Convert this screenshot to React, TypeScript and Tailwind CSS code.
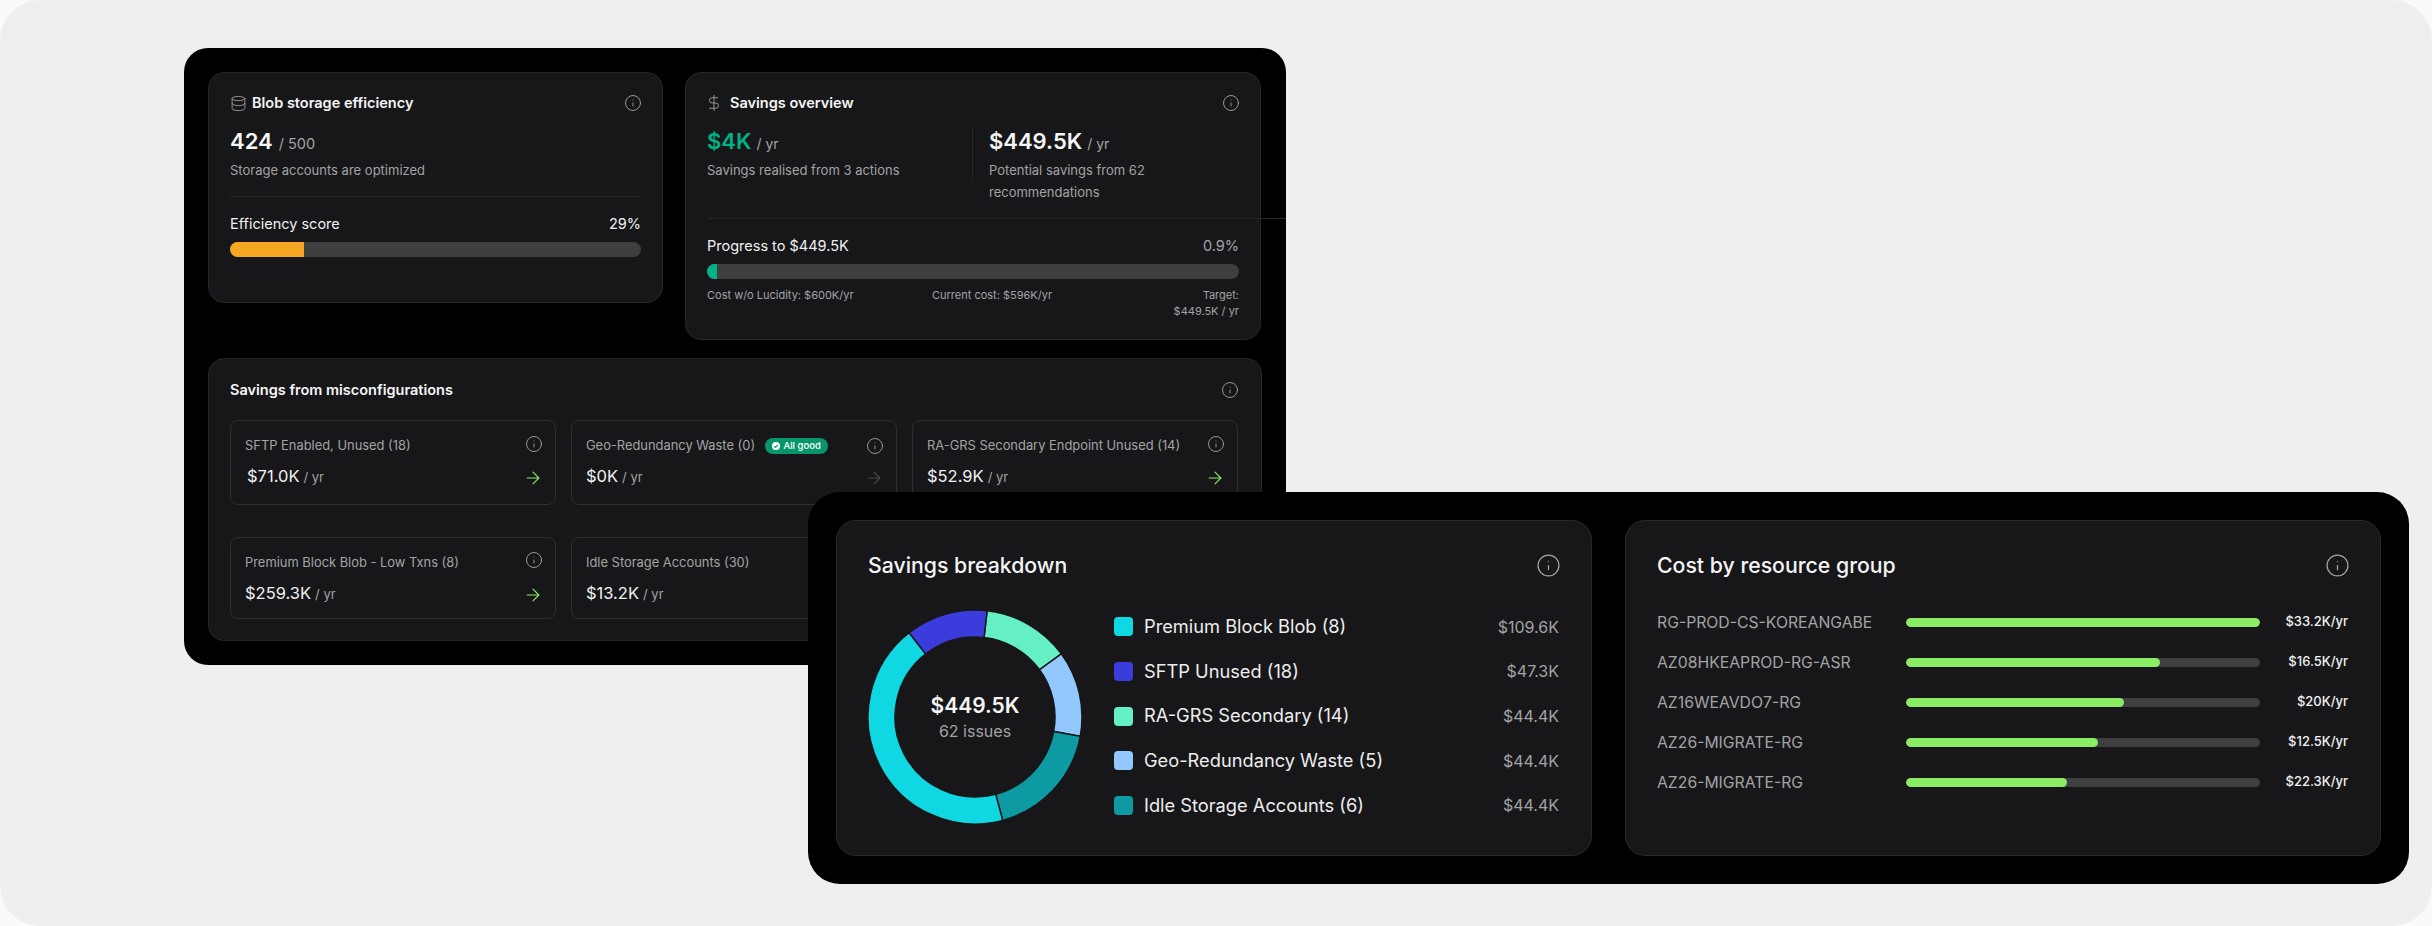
import { ArrowRight, Database, DollarSign, Info } from 'lucide-react';

const misconfigurations = [
  { label: 'SFTP Enabled, Unused (18)', value: '$71.0K', top: true, nudge: true },
  { label: 'Geo-Redundancy Waste (0)', value: '$0K', top: true, good: true },
  { label: 'RA-GRS Secondary Endpoint Unused (14)', value: '$52.9K', top: true },
  { label: 'Premium Block Blob - Low Txns (8)', value: '$259.3K', top: false },
  { label: 'Idle Storage Accounts (30)', value: '$13.2K', top: false },
];

const legend = [
  { label: 'Premium Block Blob (8)', value: '$109.6K', swatch: 'bg-[#10d8e2]' },
  { label: 'SFTP Unused (18)', value: '$47.3K', swatch: 'bg-[#3a3ddb]' },
  { label: 'RA-GRS Secondary (14)', value: '$44.4K', swatch: 'bg-[#64efc5]' },
  { label: 'Geo-Redundancy Waste (5)', value: '$44.4K', swatch: 'bg-[#93c8ff]' },
  { label: 'Idle Storage Accounts (6)', value: '$44.4K', swatch: 'bg-[#0d9aa3]' },
];

// angles are degrees clockwise from 12 o'clock
const donutSegments = [
  { from: 6.5, to: 53.8, color: '#64efc5' },
  { from: 53.8, to: 100.4, color: '#93c8ff' },
  { from: 100.4, to: 165, color: '#0d9aa3' },
  { from: 165, to: 322, color: '#10d8e2' },
  { from: 322, to: 366.5, color: '#3a3ddb' },
];

const resourceGroups = [
  { name: 'RG-PROD-CS-KOREANGABE', value: '$33.2K/yr', pct: 100 },
  { name: 'AZ08HKEAPROD-RG-ASR', value: '$16.5K/yr', pct: 71.7 },
  { name: 'AZ16WEAVDO7-RG', value: '$20K/yr', pct: 61.5 },
  { name: 'AZ26-MIGRATE-RG', value: '$12.5K/yr', pct: 54.3 },
  { name: 'AZ26-MIGRATE-RG', value: '$22.3K/yr', pct: 45.4 },
];

function polar(r: number, deg: number) {
  const a = (deg * Math.PI) / 180;
  return `${(107 + r * Math.sin(a)).toFixed(2)} ${(107 - r * Math.cos(a)).toFixed(2)}`;
}

function sectorPath(from: number, to: number) {
  const large = to - from > 180 ? 1 : 0;
  return `M${polar(107, from)} A107 107 0 ${large} 1 ${polar(107, to)} L${polar(80, to)} A80 80 0 ${large} 0 ${polar(80, from)} Z`;
}

function Donut() {
  return (
    <div className="relative w-[214px] h-[214px] shrink-0">
      <svg width="214" height="214" viewBox="0 0 214 214">
        {donutSegments.map((s) => (
          <path key={s.color} d={sectorPath(s.from, s.to)} fill={s.color} stroke="#17171a" strokeWidth="1.5" />
        ))}
      </svg>
      <div className="absolute inset-0 flex flex-col items-center justify-center">
        <div className="text-[21px] leading-[28px] font-semibold text-[#f5f5f5]">$449.5K</div>
        <div className="text-[16px] leading-[22px] text-[#a3a3a3]">62 issues</div>
      </div>
    </div>
  );
}

function InfoIcon({ size = 18, className = '' }: { size?: number; className?: string }) {
  return <Info size={size} strokeWidth={1.2} className={`text-[#a3a3a3] shrink-0 ${className}`} />;
}

function Amount({ value, className }: { value: string; className: string }) {
  return (
    <div className="h-[32px] flex items-baseline leading-[32px]">
      <span className={`text-[22px] font-semibold ${className}`}>{value}</span>
      <span className="text-[14px] ml-[5px] text-[#a3a3a3]">/ yr</span>
    </div>
  );
}

function CardTitle({ title, icon }: { title: string; icon?: React.ReactNode }) {
  return (
    <div className="flex items-center h-[18px]">
      {icon}
      <h2 className="text-[14.5px] leading-[18px] font-semibold text-[#f5f5f5]">{title}</h2>
      <InfoIcon className="ml-auto -mr-[1px]" />
    </div>
  );
}

type MisconfigCardProps = { label: string; value: string; top: boolean; good?: boolean; nudge?: boolean };

function MisconfigCard({ label, value, top, good, nudge }: MisconfigCardProps) {
  return (
    <div className="border border-[#2e2e31] rounded-[8px] pt-[15px] pl-[14px] pr-[12px]">
      <div className={`flex justify-between h-[20px] ${good ? 'items-center' : 'items-start'}`}>
        <div className="flex items-center">
          <span className="text-[12.9px] leading-[20px] text-[#a3a3a3] whitespace-nowrap">{label}</span>
          {good && (
            <span className="ml-[10px] w-[63px] h-[16px] rounded-full bg-[#07966b] flex items-center justify-center gap-[3px] text-[9.5px] font-medium text-white">
              <svg width="8" height="8" viewBox="0 0 8 8">
                <circle cx="4" cy="4" r="4" fill="#ffffff" />
                <path d="M2.2 4.1 3.5 5.4 5.9 2.8" fill="none" stroke="#07966b" strokeWidth="1.1" />
              </svg>
              All good
            </span>
          )}
        </div>
        <InfoIcon className={good ? '' : top ? '-mt-[1px]' : '-mt-[2px]'} />
      </div>
      <div className="flex items-center justify-between mt-[8px] h-[24px]">
        <div className={`flex items-baseline ${nudge ? 'ml-[2px]' : ''}`}>
          <span className="text-[16.5px] leading-[24px] text-[#f0f0f0]">{value}</span>
          <span className="text-[13px] ml-[4px] text-[#a3a3a3]">/ yr</span>
        </div>
        <ArrowRight
          size={20}
          strokeWidth={1.3}
          className={good ? 'mt-[4px] text-[#4a4a4d]' : top ? 'mt-[4px] text-[#8aed64]' : 'mt-[3px] text-[#8aed64]'}
        />
      </div>
    </div>
  );
}

export default function App() {
  return (
    <div className="w-[2432px] h-[926px] bg-[#fafafa] overflow-hidden [font-family:Inter,sans-serif]">
      <div className="relative w-full h-full rounded-[40px] bg-[#efefef] pt-[48px] pl-[184px]">
        {/* back panel */}
        <div className="w-[1102px] h-[617px] rounded-[24px] bg-black p-[24px]">
          <div className="flex items-start gap-[22px]">
            <section className="w-[455px] h-[231px] rounded-[16px] border border-[#27272a] bg-[#17171a] p-[21px]">
              <CardTitle
                title="Blob storage efficiency"
                icon={<Database size={17} strokeWidth={1.2} className="text-[#a3a3a3] mr-[5px]" />}
              />
              <div className="mt-[13px] h-[32px] flex items-baseline leading-[32px]">
                <span className="text-[22px] font-semibold text-[#f5f5f5]">424</span>
                <span className="text-[14.5px] ml-[6px] text-[#a3a3a3]">/ 500</span>
              </div>
              <p className="mt-[2px] text-[13px] leading-[22px] text-[#a3a3a3]">Storage accounts are optimized</p>
              <div className="mt-[15px] h-px bg-[#27272a]" />
              <div className="mt-[17px] flex justify-between text-[14.5px] leading-[20px] text-[#f0f0f0]">
                <span>Efficiency score</span>
                <span>29%</span>
              </div>
              <div className="mt-[8px] h-[15px] rounded-full bg-[#3f3f3f] overflow-hidden">
                <div className="h-full w-[73.5px] bg-[#f5a623]" />
              </div>
            </section>

            <section className="w-[576px] rounded-[16px] border border-[#27272a] bg-[#17171a] pt-[21px] px-[21px] pb-[20px]">
              <CardTitle
                title="Savings overview"
                icon={<DollarSign size={18} strokeWidth={1.2} className="text-[#a3a3a3] mr-[7px] -ml-[2px]" />}
              />
              <div className="mt-[13px] flex items-start">
                <div className="w-[265px]">
                  <Amount value="$4K" className="text-[#00b386]" />
                  <p className="mt-[2px] text-[13px] leading-[22px] text-[#a3a3a3]">Savings realised from 3 actions</p>
                </div>
                <div className="w-px h-[51px] mt-[2px] bg-[#27272a]" />
                <div className="w-[220px] ml-[16px]">
                  <Amount value="$449.5K" className="text-[#f5f5f5]" />
                  <p className="mt-[2px] text-[13px] leading-[22px] text-[#a3a3a3]">
                    Potential savings from 62 recommendations
                  </p>
                </div>
              </div>
              {/* this rule runs on past the card to the panel edge */}
              <div className="mt-[15px] -mr-[47px] h-px bg-[#27272a]" />
              <div className="mt-[17px] flex justify-between text-[14.5px] leading-[20px] text-[#f0f0f0]">
                <span>Progress to $449.5K</span>
                <span className="text-[#a3a3a3]">0.9%</span>
              </div>
              <div className="mt-[8px] h-[15px] rounded-full bg-[#3f3f3f] overflow-hidden">
                <div className="h-full w-[10px] bg-[#00b386]" />
              </div>
              <div className="mt-[8px] grid grid-cols-[225px_1fr_auto] text-[11px] leading-[16px] text-[#a3a3a3]">
                <span>Cost w/o Lucidity: $600K/yr</span>
                <span>Current cost: $596K/yr</span>
                <span className="text-right">
                  Target:
                  <br />
                  $449.5K / yr
                </span>
              </div>
            </section>
          </div>

          <section className="mt-[18px] rounded-[16px] border border-[#27272a] bg-[#17171a] pt-[22px] pb-[21px] pl-[21px] pr-[23px]">
            <CardTitle title="Savings from misconfigurations" />
            <div className="mt-[21px] grid grid-cols-3 grid-rows-[85px_82px] gap-x-[15px] gap-y-[32px]">
              {misconfigurations.map((m) => (
                <MisconfigCard key={m.label} {...m} />
              ))}
            </div>
          </section>
        </div>

        {/* front panel, sits over the back one */}
        <div className="absolute left-[808px] top-[492px] w-[1601px] h-[392px] rounded-[32px] bg-black p-[28px] grid grid-cols-2 gap-[33px]">
          <section className="rounded-[20px] border border-[#2a2a2d] bg-[#17171a] pt-[30px] pl-[31px] pr-[32px]">
            <div className="flex items-center justify-between h-[28px]">
              <h2 className="text-[21.25px] leading-[28px] font-medium text-[#f5f5f5]">Savings breakdown</h2>
              <InfoIcon size={25} className="-mr-[2px]" />
            </div>
            <div className="mt-[31px] flex items-center gap-[32px]">
              <Donut />
              <div className="flex-1 flex flex-col gap-[22.67px]">
                {legend.map((l) => (
                  <div key={l.label} className="flex items-center h-[22px] -translate-y-[1px]">
                    <span className={`w-[19px] h-[19px] rounded-[4px] ${l.swatch}`} />
                    <span className="ml-[11px] text-[18.25px] text-[#ededed]">{l.label}</span>
                    <span className="ml-auto text-[16px] text-[#a3a3a3]">{l.value}</span>
                  </div>
                ))}
              </div>
            </div>
          </section>

          <section className="rounded-[20px] border border-[#2a2a2d] bg-[#17171a] pt-[30px] pl-[31px] pr-[32px]">
            <div className="flex items-center justify-between h-[28px]">
              <h2 className="text-[21.25px] leading-[28px] font-medium text-[#f5f5f5]">Cost by resource group</h2>
              <InfoIcon size={25} className="-mr-[2px]" />
            </div>
            <div className="mt-[33px] flex flex-col gap-[20px]">
              {resourceGroups.map((r) => (
                <div key={r.name + r.value} className="flex items-center h-[20px]">
                  <span className="w-[249px] pt-[1px] text-[15.75px] text-[#a3a3a3] whitespace-nowrap">{r.name}</span>
                  <div className="w-[354px] h-[9px] rounded-full bg-[#3f3f3f] overflow-hidden">
                    <div className="h-full rounded-full bg-[#8aed64]" style={{ width: `${r.pct}%` }} />
                  </div>
                  <span className="flex-1 text-right text-[13px] font-medium text-[#f0f0f0]">{r.value}</span>
                </div>
              ))}
            </div>
          </section>
        </div>
      </div>
    </div>
  );
}
